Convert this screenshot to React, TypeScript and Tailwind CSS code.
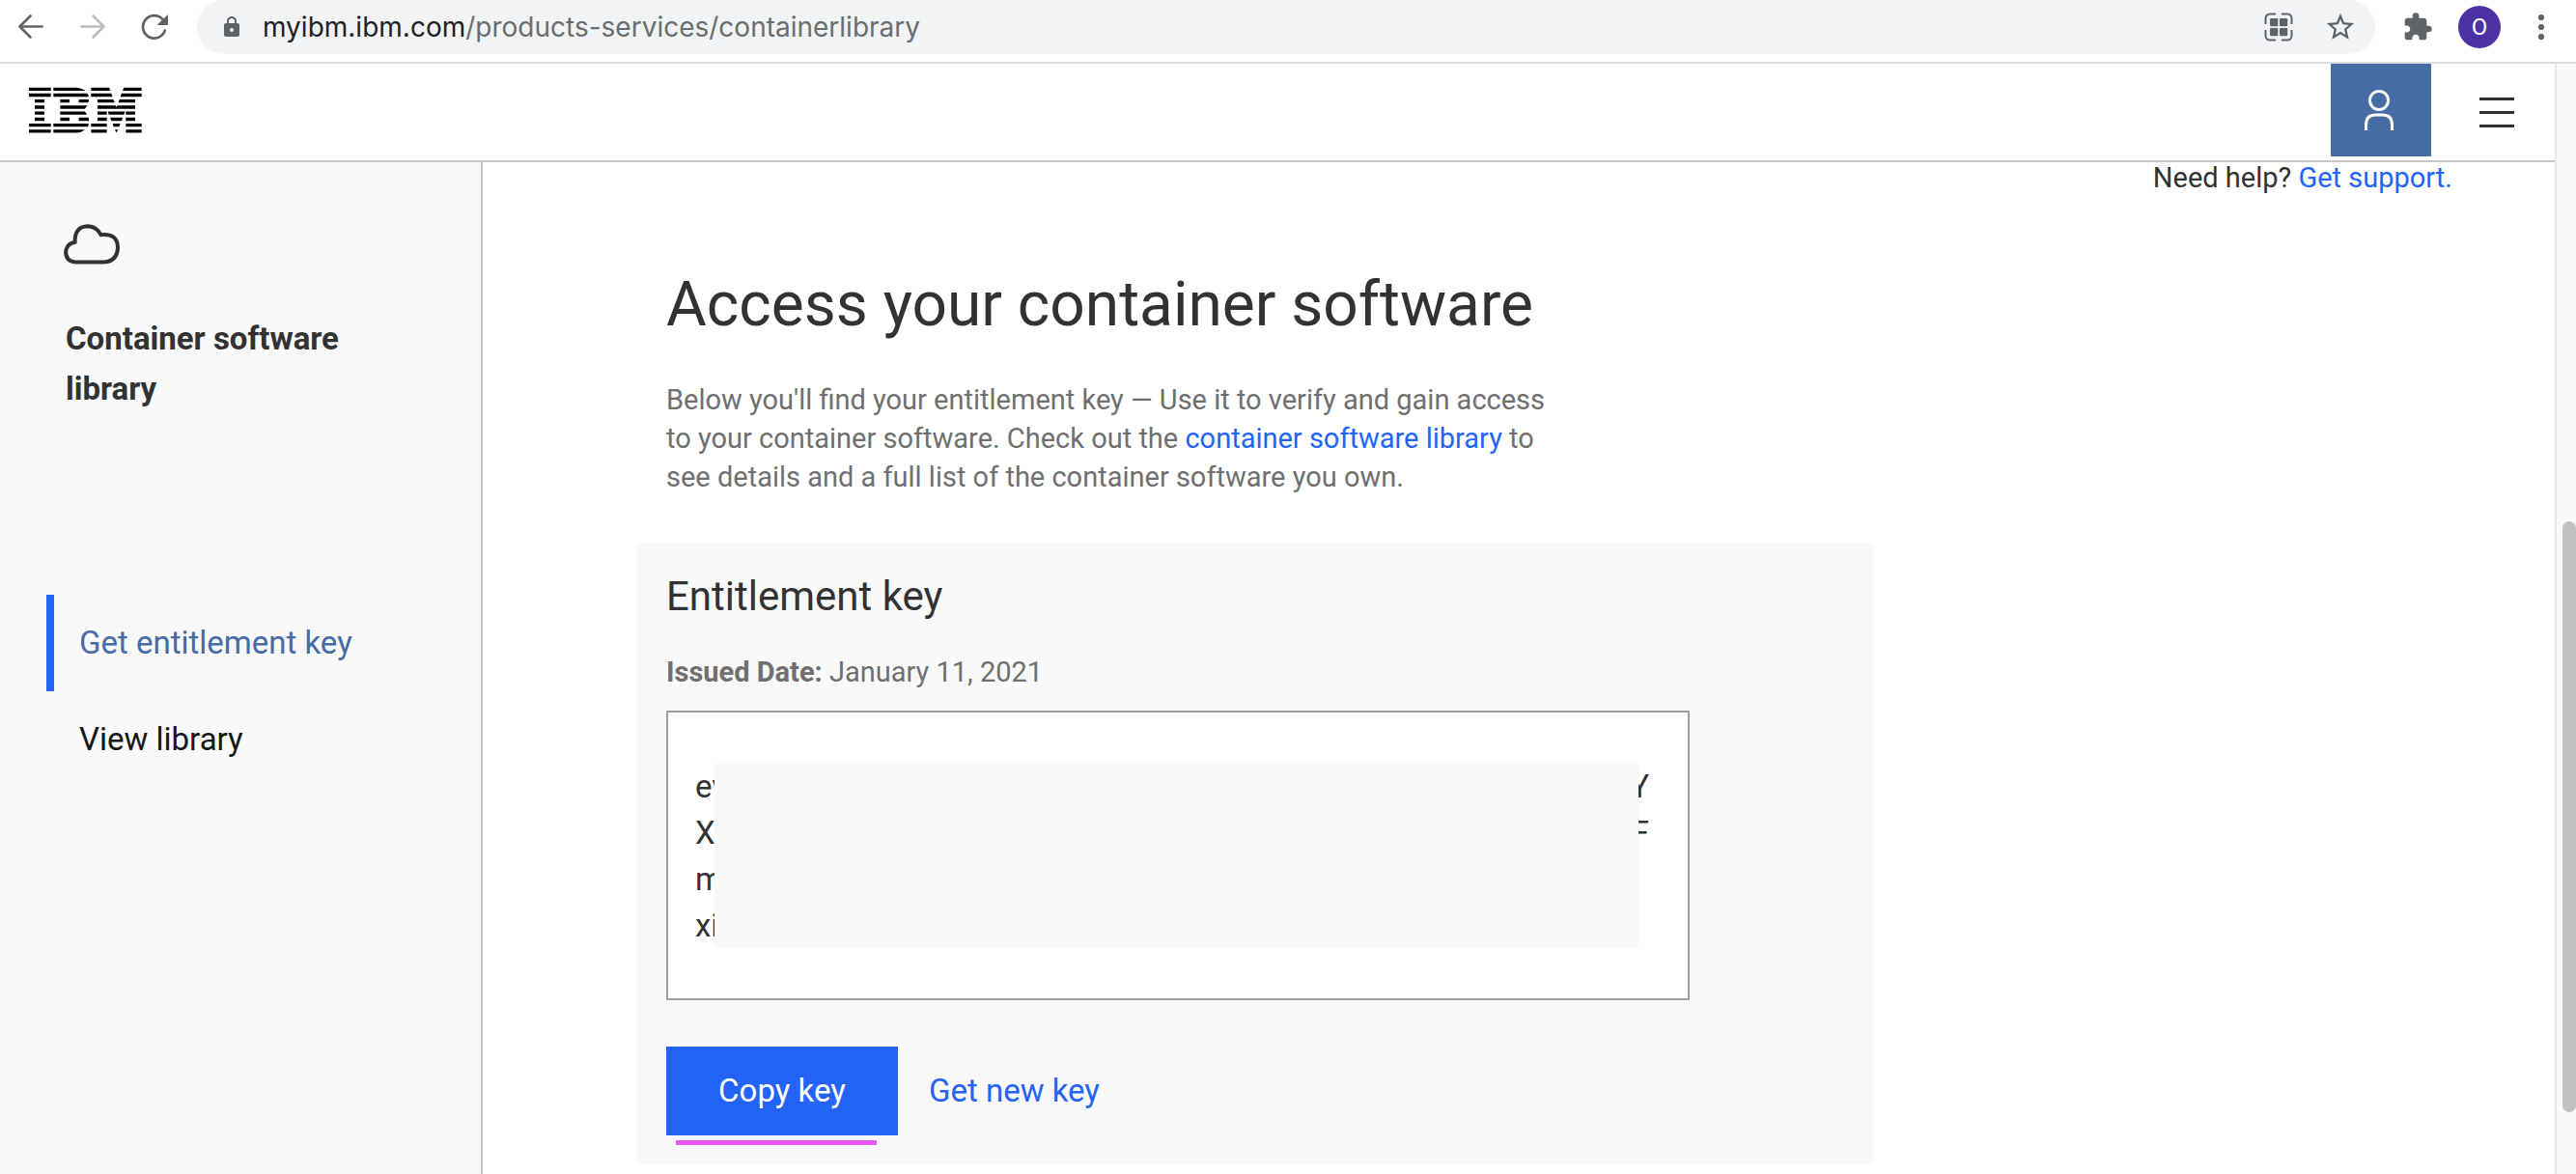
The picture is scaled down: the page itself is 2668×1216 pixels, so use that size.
import { MdExtension, MdLock, MdStarBorder } from 'react-icons/md';

function ArrowIcon({ className }: { className?: string }) {
  return (
    <svg viewBox="0 0 28 28" className={`h-7 w-7 ${className ?? ''}`} fill="none" stroke="currentColor" strokeWidth="2.7" strokeLinecap="round" aria-hidden="true">
      <path d="M25.5 13.5H3" />
      <path d="M13.5 2.5L2.5 13.5L13.5 24.5" strokeLinejoin="round" />
    </svg>
  );
}

function ReloadIcon() {
  return (
    <svg viewBox="0 0 28 28" className="h-7 w-7" aria-hidden="true">
      <path d="M24.8 17.6A11.7 11.7 0 1 1 22.2 5.8" fill="none" stroke="currentColor" strokeWidth="2.7" strokeLinecap="round" />
      <path d="M28 1V12H16.5Z" fill="currentColor" />
    </svg>
  );
}

function GridCodeIcon() {
  return (
    <svg viewBox="0 0 30 30" className="h-[30px] w-[30px]" aria-hidden="true">
      <g fill="none" stroke="currentColor" strokeWidth="2">
        <path d="M12 1.5H6A4.5 4.5 0 0 0 1.5 6V12" />
        <path d="M18 1.5H24A4.5 4.5 0 0 1 28.5 6V12" />
        <path d="M12 28.5H6A4.5 4.5 0 0 1 1.5 24V18" />
        <path d="M18 28.5H24A4.5 4.5 0 0 0 28.5 24V18" />
      </g>
      <g fill="currentColor">
        <rect x="6" y="6" width="8.3" height="8.3" rx="1.2" />
        <rect x="16" y="6" width="8.3" height="8.3" rx="1.2" />
        <rect x="6" y="16" width="8.3" height="8.3" rx="1.2" />
        <rect x="16" y="16" width="8.3" height="8.3" rx="1.2" />
      </g>
    </svg>
  );
}

function DotsIcon() {
  return (
    <svg viewBox="0 0 28 28" className="h-7 w-7" fill="currentColor" aria-hidden="true">
      <circle cx="14" cy="4" r="3.1" />
      <circle cx="14" cy="14" r="3.1" />
      <circle cx="14" cy="24" r="3.1" />
    </svg>
  );
}

function IbmLogo() {
  return (
    <svg viewBox="0 0 351 142" className="h-12 w-[117px]" fill="#000" role="img" aria-label="IBM">
      <path d="M0 1H68V11H0ZM0 19.5H68V29.5H0ZM18 38H48V48H18ZM18 57H48V67H18ZM18 75.500H48V85.500H18ZM18 94.500H48V104.500H18ZM0 113H68V123H0ZM0 131.500H68V141.500H0Z" />
      <path d="M76 1H148Q163 2 175 11H76ZM76 19.5H181Q185 24 186 29.5H76ZM97 38H126V48H97ZM155 38H186Q186 43 184 48H155ZM97 57H181Q178 63 173 67H97ZM97 75.500H173Q178 79 180 85.500H97ZM97 94.500H126V104.500H97ZM155 94.500H185Q186 99 186 104.500H155ZM76 113H186Q185 119 182 123H76ZM76 131.500H174Q163 141 148 141.500H76Z" />
      <path d="M193 1H249L253 11H193ZM295 1H350V11H291ZM193 19.500H256L260 29.500H193ZM288 19.500H350V29.500H284ZM213 38H262L266 48H213ZM281 38H330V48H278ZM213 57H269L272 62L275 57H330V67H213ZM213 75.500H242V85.500H213ZM245 75.500H298L295 85.500H248ZM301 75.500H330V85.500H301ZM213 94.500H242V104.500H213ZM252 94.500H291L288 104.500H256ZM301 94.500H330V104.500H301ZM193 113H242V123H193ZM260 113H284L280 123H263ZM301 113H350V123H301ZM193 131.500H242V141.500H193ZM267 131.500H276L272 141.500ZM301 131.500H350V141.500H301Z" />
    </svg>
  );
}

function PersonIcon() {
  return (
    <svg viewBox="0 0 32 44" className="h-11 w-8" fill="none" stroke="currentColor" strokeWidth="3" aria-hidden="true">
      <circle cx="16" cy="12" r="9.500" />
      <path d="M2.500 43V37Q2.500 27 12.500 27H19.500Q29.500 27 29.500 37V43" />
    </svg>
  );
}

function CloudIcon() {
  return (
    <svg viewBox="0 0 58 42" className="h-[42px] w-[58px]" fill="none" stroke="#323232" strokeWidth="4" aria-hidden="true">
      <path d="M11.700 20.500Q10.500 2.500 25 2.300Q34.500 2.800 38.500 11.500M37 11.300Q56 8.500 56 25Q55 38.500 42 39.500H12Q2.300 38.500 2.100 29Q3 20 12.500 18.800" />
    </svg>
  );
}

function BrowserBar() {
  return (
    <div className="flex h-[66px] items-start border-b-2 border-[#dcdcdc] bg-white pr-1 text-[#5f6368]">
      <button type="button" aria-label="Back" className="flex h-14 w-16 items-center justify-center">
        <ArrowIcon />
      </button>
      <button type="button" aria-label="Forward" disabled className="flex h-14 w-16 items-center justify-center text-[#babcbe]">
        <ArrowIcon className="rotate-y-180" />
      </button>
      <button type="button" aria-label="Reload" className="flex h-14 w-16 items-center justify-center">
        <ReloadIcon />
      </button>
      <div className="mr-3 ml-3 flex h-14 flex-1 items-center rounded-full bg-[#f1f3f4] pr-1 pl-6">
        <MdLock className="h-6 w-6" aria-hidden="true" />
        <div className="flex-1 pl-5 font-['Inter',sans-serif] text-[28px] leading-10 text-[#6a6d70]">
          <span className="text-[#202124]">myibm.ibm.com</span>/products-services/containerlibrary
        </div>
        <button type="button" aria-label="Scan code" className="flex h-14 w-16 items-center justify-center">
          <GridCodeIcon />
        </button>
        <button type="button" aria-label="Bookmark this page" className="flex h-14 w-16 items-center justify-center">
          <MdStarBorder className="h-[34px] w-[34px]" />
        </button>
      </div>
      <button type="button" aria-label="Extensions" className="flex h-14 w-16 items-center justify-center">
        <MdExtension className="h-8 w-8" />
      </button>
      <button type="button" aria-label="Profile" className="flex h-14 w-16 items-center justify-center">
        <span className="flex h-11 w-11 items-center justify-center rounded-full bg-[#4b31a1] text-2xl text-white">O</span>
      </button>
      <button type="button" aria-label="Menu" className="flex h-14 w-16 items-center justify-center">
        <DotsIcon />
      </button>
    </div>
  );
}

function SiteHeader() {
  return (
    <header className="flex h-[102px] items-start border-b-2 border-[#c6c6c6] bg-white">
      <a href="#home" className="flex h-24 items-center pl-[30px]">
        <IbmLogo />
      </a>
      <button type="button" aria-label="Account" className="ml-auto flex h-24 w-[104px] items-center justify-center bg-[#466ba5] pr-1 text-white">
        <PersonIcon />
      </button>
      <button type="button" aria-label="Open menu" className="flex h-[100px] w-32 items-center justify-center pl-2">
        <span className="flex w-9 flex-col gap-[11px]">
          <span className="h-[3px] bg-[#323232]" />
          <span className="h-[3px] bg-[#323232]" />
          <span className="h-[3px] bg-[#323232]" />
        </span>
      </button>
    </header>
  );
}

function Sidebar() {
  return (
    <aside className="w-[500px] shrink-0 border-r-2 border-[#c6c6c6] bg-[#f9f9f9] pt-16">
      <div className="pl-[66px]">
        <CloudIcon />
      </div>
      <h2 className="mt-[51px] w-[400px] pl-[68px] text-[33px] leading-[52px] font-bold text-[#323232]">Container software library</h2>
      <nav className="mt-[187px] pl-12 text-[33px]">
        <a href="#key" aria-current="page" className="flex h-[100px] items-center border-l-8 border-[#2364f6] pl-[26px] text-[#466ba5]">
          Get entitlement key
        </a>
        <a href="#library" className="flex h-[100px] items-center border-l-8 border-transparent pl-[26px] text-[#171717]">
          View library
        </a>
      </nav>
    </aside>
  );
}

const keyLines = [
  ['ev', 'Y'],
  ['X', 'F'],
  ['m', ''],
  ['xi', ''],
];

function KeyPanel() {
  return (
    <section className="mt-12 max-w-[1280px] bg-[#f9f9f9] px-[30px] pt-7 pb-[30px]">
      <h2 className="text-[42px] leading-[56px] text-[#323232]">Entitlement key</h2>
      <p className="mt-[30px] text-[29px] leading-10 text-[#6f6f6f]">
        <strong className="font-bold">Issued Date:</strong> January 11, 2021
      </p>
      <div className="relative mt-5 max-w-[1060px] border-2 border-[#989f9e] bg-white px-7 pt-[53px] pb-[51px] text-[33px] leading-[48px] text-[#323232]">
        {keyLines.map(([start, end]) => (
          <div key={start} className="flex justify-between pr-3">
            <span>{start}</span>
            <span>{end}</span>
          </div>
        ))}
        <div className="absolute top-[53px] right-[51px] bottom-[52px] left-12 bg-[#f9f9f9]" />
      </div>
      <div className="mt-12 flex items-center gap-8">
        <div className="relative">
          <button type="button" className="h-[92px] w-60 bg-[#2364f6] text-[33px] text-white">
            Copy key
          </button>
          <span className="absolute -bottom-[10px] left-[10px] h-[5px] w-[208px] bg-[#ea58f6]" />
        </div>
        <a href="#new-key" className="text-[33px] text-[#2364f6]">
          Get new key
        </a>
      </div>
    </section>
  );
}

export default function App() {
  return (
    <div className="flex min-h-screen flex-col bg-white font-['Roboto',sans-serif]">
      <BrowserBar />
      <div className="flex flex-1">
        <div className="flex min-w-0 flex-1 flex-col">
          <SiteHeader />
          <div className="flex flex-1">
            <Sidebar />
            <main className="min-w-0 flex-1 pl-40">
              <p className="pr-[106px] text-right text-[29px] leading-8 text-[#323232]">
                Need help?{' '}
                <a href="#support" className="text-[#2364f6]">
                  Get support.
                </a>
              </p>
              <div className="mt-[76px] pl-[30px]">
                <h1 className="text-[64px] leading-[80px] text-[#323232]">Access your container software</h1>
                <p className="mt-[38px] max-w-[940px] text-[29px] leading-10 text-[#6f6f6f]">
                  Below you'll find your entitlement key — Use it to verify and gain access to your container software. Check out the{' '}
                  <a href="#library" className="text-[#2364f6]">
                    container software library
                  </a>{' '}
                  to see details and a full list of the container software you own.
                </p>
              </div>
              <KeyPanel />
            </main>
          </div>
        </div>
        <div className="w-[22px] shrink-0 border-l-2 border-[#e8e8e8] bg-[#fafafa] pl-1.5">
          <div className="mt-[474px] h-[612px] rounded-full bg-[#c1c1c1]" />
        </div>
      </div>
    </div>
  );
}
